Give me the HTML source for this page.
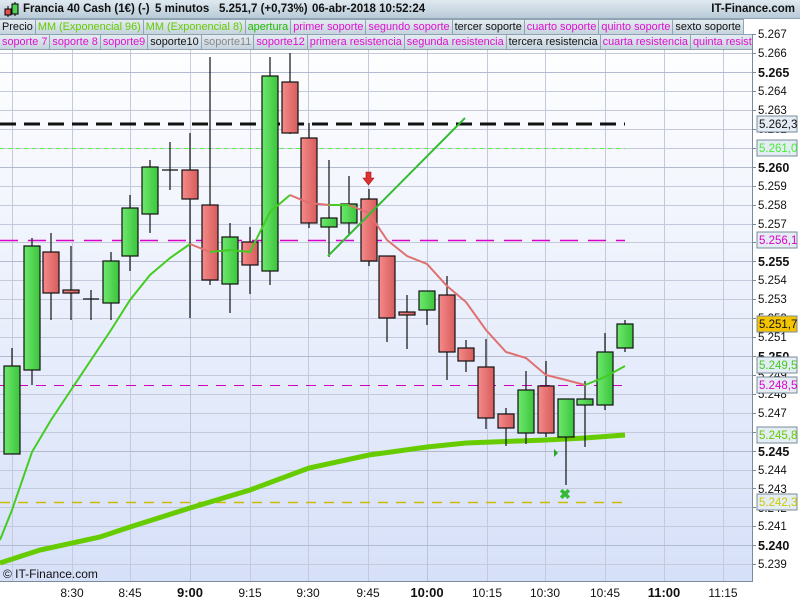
<!DOCTYPE html>
<html><head><meta charset="utf-8"><style>
*{margin:0;padding:0;box-sizing:border-box}
body{width:800px;height:600px;overflow:hidden;background:#fff;font-family:"Liberation Sans",sans-serif;position:relative}
#hdr{position:absolute;left:0;top:0;width:800px;height:19px;background:linear-gradient(#dfe9f0,#b9cbd8);border-bottom:1px solid #8fa3b3;font-size:11.5px;font-weight:bold;color:#111}
#hdr span{position:absolute;top:3px;white-space:pre}
.row{position:absolute;left:0;height:16px;display:flex;font-size:10.9px;background:#fff}
.row div{border:1px solid #8fa3b3;border-left:none;padding:0 2px;line-height:14px;background:linear-gradient(#e4ecf1,#c5d4de);white-space:nowrap}
.m{color:#e010d0}.g{color:#66cc00}.k{color:#111}.gr{color:#888}.gg{color:#22bb00}
svg{position:absolute;left:0;top:0}
</style></head><body>
<svg width="800" height="600" font-family="Liberation Sans, sans-serif">
<defs><linearGradient id="bg" x1="0" y1="0" x2="0" y2="1"><stop offset="0" stop-color="#ffffff"/><stop offset="1" stop-color="#d6e0f8"/></linearGradient>
<linearGradient id="gc" x1="0" x2="1"><stop offset="0" stop-color="#6ee86e"/><stop offset="1" stop-color="#3cc43c"/></linearGradient>
<linearGradient id="rc" x1="0" x2="1"><stop offset="0" stop-color="#f58a8a"/><stop offset="1" stop-color="#d85c5c"/></linearGradient></defs>
<rect x="0" y="34" width="752" height="547" fill="url(#bg)"/>
<g stroke="#c4cadc" stroke-width="1">
<path d="M0 34.5H752M0 53.5H752M0 72.5H752M0 91.5H752M0 110.5H752M0 129.5H752M0 148.5H752M0 167.5H752M0 186.5H752M0 205.5H752M0 224.5H752M0 242.5H752M0 261.5H752M0 280.5H752M0 299.5H752M0 318.5H752M0 337.5H752M0 356.5H752M0 375.5H752M0 394.5H752M0 413.5H752M0 432.5H752M0 451.5H752M0 470.5H752M0 488.5H752M0 507.5H752M0 526.5H752M0 545.5H752M0 564.5H752"/>
<path d="M12.5 34V581M72.5 34V581M130.5 34V581M250.5 34V581M308.5 34V581M368.5 34V581M487.5 34V581M545.5 34V581M605.5 34V581M664.5 34V581M723.5 34V581"/>
</g>
<g stroke="#a8b0c8"><path d="M190.5 34V581M427.5 34V581M0 72.5H752M0 167.5H752M0 261.5H752M0 356.5H752M0 451.5H752M0 545.5H752" opacity="0.6"/></g>
<line x1="0" y1="124" x2="625" y2="124" stroke="#111" stroke-width="3" stroke-dasharray="16,8"/>
<line x1="0" y1="148.5" x2="625" y2="148.5" stroke="#55ee44" stroke-width="1" stroke-dasharray="4,4"/>
<line x1="0" y1="240.5" x2="625" y2="240.5" stroke="#dd00cc" stroke-width="1.5" stroke-dasharray="18,10"/>
<line x1="0" y1="385.5" x2="625" y2="385.5" stroke="#cc00bb" stroke-width="1" stroke-dasharray="10,8"/>
<line x1="0" y1="502.5" x2="625" y2="502.5" stroke="#ccbb00" stroke-width="1.5" stroke-dasharray="10,8"/>
<polyline fill="none" stroke="#66cc00" stroke-width="5" points="0,563 40,550 100,537 130,527 190,508 250,490 309,468 369,455 427,447 466,443 546,440 585,438 625,435"/>
<g stroke="#111" stroke-width="1.2">
<path d="M12 348V454M32 238V385M51 233V320M71 246V320M91 290V320M111 252V320M130 195V271M150 160V233M170 142V190M190 133V318M210 57V285M230 223V313M250 227V294M270 57V285M290 53V134M309 123V228M329 160V257M349 176V235M369 189V266M387 256V342M407 295V349M427 291V325M447 276V380M466 340V372M486 339V429M506 408V446M526 371V444M546 361V437M566 399V485M585 381V447M605 333V410M625 320V352"/>
<path d="M83 299H99M162 170H178"/>
</g>
<g stroke="#111" stroke-width="1.2" fill="url(#gc)">
<rect x="4" y="366" width="16" height="88"/><rect x="24" y="246" width="16" height="124"/>
<rect x="103" y="261" width="16" height="42"/><rect x="122" y="208" width="16" height="48"/>
<rect x="142" y="167" width="16" height="47"/><rect x="222" y="237" width="16" height="47"/>
<rect x="262" y="76" width="16" height="195"/><rect x="321" y="218" width="16" height="9"/>
<rect x="341" y="204" width="16" height="19"/><rect x="419" y="291" width="16" height="19"/>
<rect x="518" y="390" width="16" height="43"/><rect x="558" y="399" width="16" height="38"/>
<rect x="577" y="399" width="16" height="6"/><rect x="597" y="352" width="16" height="53"/>
<rect x="617" y="324" width="16" height="24"/>
</g>
<g stroke="#111" stroke-width="1.2" fill="url(#rc)">
<rect x="43" y="252" width="16" height="41"/><rect x="63" y="290" width="16" height="3"/>
<rect x="182" y="170" width="16" height="29"/><rect x="202" y="205" width="16" height="75"/>
<rect x="242" y="242" width="16" height="23"/><rect x="282" y="82" width="16" height="51"/>
<rect x="301" y="138" width="16" height="85"/><rect x="361" y="199" width="16" height="62"/>
<rect x="379" y="256" width="16" height="62"/><rect x="399" y="312" width="16" height="3"/>
<rect x="439" y="295" width="16" height="57"/><rect x="458" y="348" width="16" height="13"/>
<rect x="478" y="367" width="16" height="51"/><rect x="498" y="414" width="16" height="14"/>
<rect x="538" y="386" width="16" height="47"/>
</g>
<polyline fill="none" stroke="#44cc22" stroke-width="2" points="0,540 12,510 32,452 51,420 71,390 91,360 111,330 130,300 150,275 170,258 190,244"/>
<polyline fill="none" stroke="#e07070" stroke-width="2" points="190,244 210,252"/>
<polyline fill="none" stroke="#44cc22" stroke-width="2" points="210,252 230,250 250,252 270,212 290,195"/>
<polyline fill="none" stroke="#e07070" stroke-width="2" points="290,195 309,203 329,205"/>
<polyline fill="none" stroke="#44cc22" stroke-width="2" points="329,205 349,205"/>
<polyline fill="none" stroke="#e07070" stroke-width="2" points="349,205 369,213 387,240 407,256 427,264 447,286 466,302 486,330 506,352 526,358 546,375 566,380 585,385"/>
<polyline fill="none" stroke="#44cc22" stroke-width="2" points="585,385 605,377 625,366"/>
<line x1="328" y1="256" x2="465" y2="118" stroke="#33bb33" stroke-width="2"/>
<path d="M366 172h5v6h3l-5.5 7l-5.5-7h3z" fill="#e03030" stroke="#a01010" stroke-width="0.6"/>
<path d="M554 449l4 4l-4 4z" fill="#22aa22"/>
<text x="565" y="499" text-anchor="middle" font-size="14" font-weight="bold" fill="#33bb33">✖</text>
<line x1="752.5" y1="34" x2="752.5" y2="582" stroke="#7a8c9a"/>
<line x1="0" y1="581.5" x2="753" y2="581.5" stroke="#7a8c9a"/>
<g stroke="#7a8c9a"><path d="M752 34.5h4M752 53.5h4M752 72.5h4M752 91.5h4M752 110.5h4M752 129.5h4M752 148.5h4M752 167.5h4M752 186.5h4M752 205.5h4M752 224.5h4M752 242.5h4M752 261.5h4M752 280.5h4M752 299.5h4M752 318.5h4M752 337.5h4M752 356.5h4M752 375.5h4M752 394.5h4M752 413.5h4M752 432.5h4M752 451.5h4M752 470.5h4M752 488.5h4M752 507.5h4M752 526.5h4M752 545.5h4M752 564.5h4"/></g>
<g font-size="11.5" fill="#111">
<text x="758" y="38">5.267</text><text x="758" y="57">5.266</text><text x="758" y="77" font-weight="bold" font-size="12.5">5.265</text><text x="758" y="95">5.264</text><text x="758" y="114">5.263</text><text x="758" y="133">5.262</text><text x="758" y="152">5.261</text><text x="758" y="172" font-weight="bold" font-size="12.5">5.260</text><text x="758" y="190">5.259</text><text x="758" y="209">5.258</text><text x="758" y="228">5.257</text><text x="758" y="246">5.256</text><text x="758" y="266" font-weight="bold" font-size="12.5">5.255</text><text x="758" y="284">5.254</text><text x="758" y="303">5.253</text><text x="758" y="322">5.252</text><text x="758" y="341">5.251</text><text x="758" y="361" font-weight="bold" font-size="12.5">5.250</text><text x="758" y="379">5.249</text><text x="758" y="398">5.248</text><text x="758" y="417">5.247</text><text x="758" y="436">5.246</text><text x="758" y="456" font-weight="bold" font-size="12.5">5.245</text><text x="758" y="474">5.244</text><text x="758" y="493">5.243</text><text x="758" y="512">5.242</text><text x="758" y="530">5.241</text><text x="758" y="550" font-weight="bold" font-size="12.5">5.240</text><text x="758" y="568">5.239</text>
</g>
<g font-size="11.5">
<rect x="757" y="116" width="40" height="16" fill="#e4ecf4" stroke="#7a8c9a"/><text x="759" y="128" fill="#111">5.262,3</text>
<rect x="757" y="140" width="40" height="16" fill="#e4ecf4" stroke="#7a8c9a"/><text x="759" y="152" fill="#44ee33">5.261,0</text>
<rect x="757" y="232" width="40" height="16" fill="#e4ecf4" stroke="#7a8c9a"/><text x="759" y="244" fill="#dd00cc">5.256,1</text>
<rect x="757" y="316" width="40" height="16" fill="#f5c400" stroke="#7a8c9a"/><text x="759" y="328" fill="#111">5.251,7</text>
<rect x="757" y="357" width="40" height="16" fill="#e4ecf4" stroke="#7a8c9a"/><text x="759" y="369" fill="#44cc22">5.249,5</text>
<rect x="757" y="377" width="40" height="16" fill="#e4ecf4" stroke="#7a8c9a"/><text x="759" y="389" fill="#dd00cc">5.248,5</text>
<rect x="757" y="427" width="40" height="16" fill="#e4ecf4" stroke="#7a8c9a"/><text x="759" y="439" fill="#66cc00">5.245,8</text>
<rect x="757" y="494" width="40" height="16" fill="#e4ecf4" stroke="#7a8c9a"/><text x="759" y="506" fill="#cccc00">5.242,3</text>
</g>
<g font-size="12" fill="#111" text-anchor="middle">
<text x="72" y="597">8:30</text><text x="130" y="597">8:45</text><text x="190" y="597" font-weight="bold" font-size="13">9:00</text><text x="250" y="597">9:15</text><text x="308" y="597">9:30</text><text x="368" y="597">9:45</text><text x="427" y="597" font-weight="bold" font-size="13">10:00</text><text x="487" y="597">10:15</text><text x="545" y="597">10:30</text><text x="605" y="597">10:45</text><text x="664" y="597" font-weight="bold" font-size="13">11:00</text><text x="723" y="597">11:15</text>
</g>
<text x="3" y="578" font-size="12" fill="#111">© IT-Finance.com</text>
</svg>
<div id="hdr">
<svg width="20" height="18" style="left:2px;top:1px"><line x1="6" y1="5" x2="6" y2="16" stroke="#000"/><rect x="3" y="8" width="6" height="6" fill="#e05050" stroke="#000"/><line x1="13" y1="1" x2="13" y2="15" stroke="#000"/><rect x="10" y="3" width="6" height="10" fill="#50d050" stroke="#000"/></svg>
<span style="left:23px">Francia 40 Cash (1€) (-)</span>
<span style="left:155px">5 minutos</span>
<span style="left:219px">5.251,7 (+0,73%)</span>
<span style="left:312px">06-abr-2018 10:52:24</span>
<span style="right:5px">IT-Finance.com</span>
</div>
<div class="row" style="top:19px"><div class="k">Precio</div><div class="g">MM (Exponencial 96)</div><div class="g">MM (Exponencial 8)</div><div class="gg">apertura</div><div class="m">primer soporte</div><div class="m">segundo soporte</div><div class="k">tercer soporte</div><div class="m">cuarto soporte</div><div class="m">quinto soporte</div><div class="k">sexto soporte</div></div>
<div class="row" style="top:34px;width:752px;overflow:hidden"><div class="m">soporte 7</div><div class="m">soporte 8</div><div class="m">soporte9</div><div class="k">soporte10</div><div class="gr">soporte11</div><div class="m">soporte12</div><div class="m">primera resistencia</div><div class="m">segunda resistencia</div><div class="k">tercera resistencia</div><div class="m">cuarta resistencia</div><div class="m">quinta resistencia</div></div>
</body></html>
